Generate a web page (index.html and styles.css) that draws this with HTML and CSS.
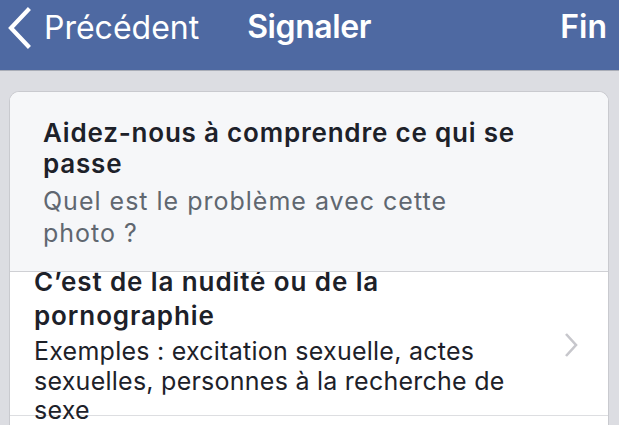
FILE: index.html
```html
<!DOCTYPE html>
<html>
<head>
  <title>Signaler</title>
  <link rel="stylesheet" href="styles.css">
</head>
<body>
  <div class="navbar">
    <a class="nav-back">
      <svg class="back-icon" width="26" height="42" viewBox="0 0 26 42">
        <path d="M22 3 L5 21 L22 39" fill="none" stroke="#fff" stroke-width="4.2" stroke-linecap="square"/>
      </svg>
      <span>Précédent</span>
    </a>
    <div class="nav-title">Signaler</div>
    <a class="nav-done">Fin</a>
  </div>

  <div class="card">
    <div class="card-header">
      <h1>Aidez-nous à comprendre ce qui se passe</h1>
      <p>Quel est le problème avec cette photo ?</p>
    </div>

    <div class="option">
      <div class="option-text">
        <h2>C’est de la nudité ou de la pornographie</h2>
        <p>Exemples : excitation sexuelle, actes sexuelles, personnes à la recherche de sexe</p>
      </div>
      <svg class="chevron" width="14" height="26" viewBox="0 0 14 26">
        <path d="M2 2 L12 13 L2 24" fill="none" stroke="#c7c7cc" stroke-width="2.6"/>
      </svg>
    </div>
    <div class="option next"></div>
  </div>
</body>
</html>
```

FILE: styles.css
```css
body {
  margin: 0;
  height: 425px;
  overflow: hidden;
  background-color: #dcdde2;
  font-family: Inter, "Noto Sans", sans-serif;
  color: #1d2129;
}
.navbar {
  display: flex;
  align-items: flex-start;
  height: 70px;
  padding: 0 12px 0 6px;
  background-color: #4e69a2;
  border-bottom: 1px solid #a9adb7;
  color: #fff;
}
.nav-back {
  display: flex;
  align-items: center;
  gap: 12px;
  height: 54px;
  font-size: 32px;
}
.back-icon {
  margin-top: 2px;
}
.nav-title {
  height: 54px;
  line-height: 54px;
  margin-left: 48px;
  font-size: 32px;
  font-weight: 600;
  letter-spacing: -0.4px;
}
.nav-done {
  margin-left: auto;
  height: 54px;
  line-height: 54px;
  font-size: 32px;
  font-weight: 600;
}
.card {
  margin: 20px 10px 0 9px;
  background-color: #fff;
  border: 1px solid #c9cacf;
  border-bottom: none;
  border-radius: 10px 10px 0 0;
  overflow: hidden;
}
.card-header {
  position: relative;
  z-index: 1;
  padding: 25px 30px 22px 33px;
  background-color: #f6f7f9;
  border-bottom: 1px solid #cfd0d4;
}
.card-header h1 {
  margin: 0 0 6px 0;
  max-width: 500px;
  font-size: 26px;
  line-height: 31px;
  font-weight: 600;
  letter-spacing: 0.8px;
}
.card-header p {
  margin: 0;
  max-width: 450px;
  font-size: 25px;
  line-height: 32px;
  color: #606770;
  letter-spacing: 1px;
}
.option {
  display: flex;
  align-items: center;
  height: 143px;
  padding: 0 30px 0 24px;
  border-bottom: 1px solid #dddee1;
}
.option-text {
  flex: 1;
  margin-top: -7px;
  align-self: flex-start;
  max-width: 490px;
}
.option-text h2 {
  margin: 0 0 4px 0;
  font-size: 26px;
  line-height: 34px;
  font-weight: 600;
  letter-spacing: 0.9px;
}
.option-text p {
  margin: 0;
  font-size: 25px;
  line-height: 29.5px;
  letter-spacing: 0.25px;
}
.chevron {
  margin-left: auto;
  margin-top: 2px;
}
.option.next {
  height: 60px;
  border-bottom: none;
}
```
